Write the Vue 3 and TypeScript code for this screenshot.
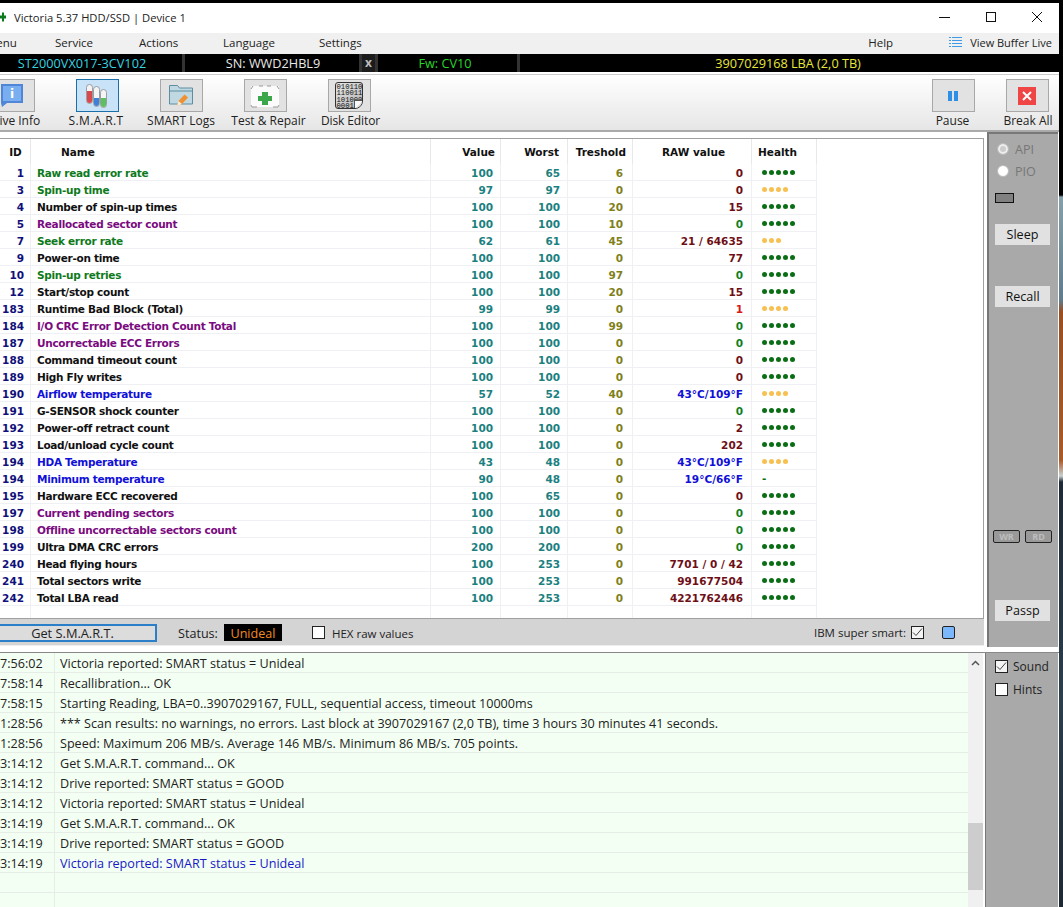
<script setup lang="ts">
interface Row { id: number; name: string; kind: string; val: number; worst: number; thr: number; raw: string; rawKind: string; dots: number; dotKind: string }
const r = (id: number, name: string, kind: string, val: number, worst: number, thr: number, raw: string, rawKind = 'maroon', dots = 5, dotKind = 'good'): Row =>
  ({ id, name, kind, val, worst, thr, raw, rawKind, dots, dotKind })
const rows: Row[] = [
  r(1, 'Raw read error rate', 'green', 100, 65, 6, '0'),
  r(3, 'Spin-up time', 'green', 97, 97, 0, '0', 'maroon', 4, 'warn'),
  r(4, 'Number of spin-up times', 'black', 100, 100, 20, '15'),
  r(5, 'Reallocated sector count', 'purple', 100, 100, 10, '0', 'zero'),
  r(7, 'Seek error rate', 'green', 62, 61, 45, '21 / 64635', 'maroon', 3, 'warn'),
  r(9, 'Power-on time', 'black', 100, 100, 0, '77'),
  r(10, 'Spin-up retries', 'green', 100, 100, 97, '0', 'zero'),
  r(12, 'Start/stop count', 'black', 100, 100, 20, '15'),
  r(183, 'Runtime Bad Block (Total)', 'black', 99, 99, 0, '1', 'red', 4, 'warn'),
  r(184, 'I/O CRC Error Detection Count Total', 'purple', 100, 100, 99, '0', 'zero'),
  r(187, 'Uncorrectable ECC Errors', 'purple', 100, 100, 0, '0', 'zero'),
  r(188, 'Command timeout count', 'black', 100, 100, 0, '0'),
  r(189, 'High Fly writes', 'black', 100, 100, 0, '0'),
  r(190, 'Airflow temperature', 'blue', 57, 52, 40, '43°C/109°F', 'blue', 4, 'warn'),
  r(191, 'G-SENSOR shock counter', 'black', 100, 100, 0, '0', 'zero'),
  r(192, 'Power-off retract count', 'black', 100, 100, 0, '2'),
  r(193, 'Load/unload cycle count', 'black', 100, 100, 0, '202'),
  r(194, 'HDA Temperature', 'blue', 43, 48, 0, '43°C/109°F', 'blue', 4, 'warn'),
  r(194, 'Minimum temperature', 'blue', 90, 48, 0, '19°C/66°F', 'blue', 0, 'none'),
  r(195, 'Hardware ECC recovered', 'black', 100, 65, 0, '0'),
  r(197, 'Current pending sectors', 'purple', 100, 100, 0, '0', 'zero'),
  r(198, 'Offline uncorrectable sectors count', 'purple', 100, 100, 0, '0', 'zero'),
  r(199, 'Ultra DMA CRC errors', 'black', 200, 200, 0, '0', 'zero'),
  r(240, 'Head flying hours', 'black', 100, 253, 0, '7701 / 0 / 42'),
  r(241, 'Total sectors write', 'black', 100, 253, 0, '991677504'),
  r(242, 'Total LBA read', 'black', 100, 253, 0, '4221762446'),
]
const logs: [string, string, boolean][] = [
  ['7:56:02', 'Victoria reported: SMART status = Unideal', false],
  ['7:58:14', 'Recallibration... OK', false],
  ['7:58:15', 'Starting Reading, LBA=0..3907029167, FULL, sequential access, timeout 10000ms', false],
  ['1:28:56', '*** Scan results: no warnings, no errors. Last block at 3907029167 (2,0 TB), time 3 hours 30 minutes 41 seconds.', false],
  ['1:28:56', 'Speed: Maximum 206 MB/s. Average 146 MB/s. Minimum 86 MB/s. 705 points.', false],
  ['3:14:12', 'Get S.M.A.R.T. command... OK', false],
  ['3:14:12', 'Drive reported: SMART status = GOOD', false],
  ['3:14:12', 'Victoria reported: SMART status = Unideal', false],
  ['3:14:19', 'Get S.M.A.R.T. command... OK', false],
  ['3:14:19', 'Drive reported: SMART status = GOOD', false],
  ['3:14:19', 'Victoria reported: SMART status = Unideal', true],
  ['', '', false],
  ['', '', false],
]
</script>

<template>
  <div class="win">
    <div class="main">
      <header class="title">
        <svg class="appicon" width="6" height="10" viewBox="0 0 6 10"><path d="M0 3.500h2V0.500h2v3h2v3H4v3H2v-3H0z" fill="#0a7a1e" /></svg>
        <span class="title-text">Victoria 5.37 HDD/SSD | Device 1</span>
        <span class="caps">
          <svg width="12" height="12" viewBox="0 0 12 12"><path d="M0 6.500h11" stroke="#111" fill="none" /></svg>
          <svg width="12" height="12" viewBox="0 0 12 12"><rect x="1.500" y="1.500" width="9" height="9" stroke="#111" fill="none" /></svg>
          <svg width="12" height="12" viewBox="0 0 12 12"><path d="M1 1l10 10M11 1L1 11" stroke="#111" fill="none" /></svg>
        </span>
      </header>
      <nav class="menu">
        <span class="m1">Menu</span><span class="m2">Service</span><span class="m3">Actions</span><span class="m4">Language</span><span class="m5">Settings</span>
        <span class="help">Help</span>
        <svg width="13" height="13" viewBox="0 0 13 13" class="bufic"><path d="M0 1.500h2M3 1.500h10M0 4.500h2M3 4.500h10M0 7.500h2M3 7.500h10M0 10.500h2M3 10.500h10" stroke="#3f9be8" fill="none" /></svg>
        <span class="buf">View Buffer Live</span>
      </nav>
      <div class="info">
        <span class="i-model">ST2000VX017-3CV102</span>
        <span class="i-sn">SN: WWD2HBL9</span>
        <span class="i-x">x</span>
        <span class="i-fw">Fw: CV10</span>
        <span class="i-lba">3907029168 LBA (2,0 TB)</span>
      </div>
      <div class="toolbar">
        <div class="tool t-drive">
          <span class="tbtn">
            <svg class="ic-drive" width="22" height="23" viewBox="0 0 22 23"><path d="M0 0h22v19H6l-5 4-1-4z" fill="#4f86d8" /><rect x="2" y="2" width="18" height="15" fill="#79aef0" /><text x="11" y="14" font-size="12" font-weight="700" text-anchor="middle" fill="#fff" font-family="DejaVu Sans">i</text></svg>
          </span>
          <span class="lbl">Drive Info</span>
        </div>
        <div class="tool t-smart">
          <span class="tbtn active">
            <svg width="22" height="24" viewBox="0 0 22 24">
              <rect x=".500" y=".500" width="6" height="19" rx="3" fill="#f4f4f4" stroke="#8a8a8a" stroke-width=".8" /><path d="M1 7h5v9.500a2.500 2.500 0 0 1-5 0z" fill="#d8484c" />
              <rect x="7.500" y="2.500" width="6" height="20" rx="3" fill="#f4f4f4" stroke="#8a8a8a" stroke-width=".8" /><path d="M8 14h5v5.500a2.500 2.500 0 0 1-5 0z" fill="#3f7fd8" />
              <rect x="14.500" y="5.500" width="6" height="18" rx="3" fill="#f4f4f4" stroke="#8a8a8a" stroke-width=".8" /><path d="M15 14h5v6.500a2.500 2.500 0 0 1-5 0z" fill="#5cc060" />
            </svg>
          </span>
          <span class="lbl">S.M.A.R.T</span>
        </div>
        <div class="tool t-logs">
          <span class="tbtn">
            <svg width="24" height="23" viewBox="0 0 24 23">
              <path d="M.500 1.500h8l2 2.500H23.500V20H.500z" fill="#bfd8e2" stroke="#5d8ea3" />
              <path d="M.500 7h23" stroke="#5d8ea3" />
              <path d="M8 22l1.500-5 6-6.500 3.500 3-6 6.500z" fill="#f09030" /><path d="M8 22l1.500-5 3.500 3z" fill="#fbeed8" />
            </svg>
          </span>
          <span class="lbl">SMART Logs</span>
        </div>
        <div class="tool t-test">
          <span class="tbtn">
            <svg width="30" height="24" viewBox="0 0 30 24">
              <rect x="1" y="2" width="28" height="21" fill="#fbfbfb" />
              <path d="M1 5l2-3M29 5l-2-3M1 21l1 2h5M29 21l-1 2h-5M9 2h4M17 2h4" fill="none" stroke="#999" />
              <path d="M12 8h6v4h4v5h-4v4h-6v-4H8v-5h4z" fill="#3aa84a" />
            </svg>
          </span>
          <span class="lbl">Test &amp; Repair</span>
        </div>
        <div class="tool t-disk">
          <span class="tbtn">
            <span class="disk">
              <span>010110</span><span>110011</span><span>101000</span><span>0001</span>
            </span>
          </span>
          <span class="lbl">Disk Editor</span>
        </div>
        <div class="tool t-pause">
          <span class="tbtn">
            <svg width="10" height="10" viewBox="0 0 10 10"><path d="M0 0h4v10H0zM6 0h4v10H6z" fill="#2f8fe6" /></svg>
          </span>
          <span class="lbl">Pause</span>
        </div>
        <div class="tool t-break">
          <span class="tbtn">
            <span class="redx"><svg width="12" height="12" viewBox="0 0 12 12"><path d="M2 2l8 8M10 2l-8 8" stroke="#fff" stroke-width="2" fill="none" /></svg></span>
          </span>
          <span class="lbl">Break All</span>
        </div>
      </div>

      <div class="middle">
        <section class="smart">
          <div class="table">
            <div class="thead">
              <span class="c-id">ID</span><span class="c-name">Name</span><span class="c-val">Value</span><span class="c-worst">Worst</span><span class="c-thr">Treshold</span><span class="c-raw">RAW value</span><span class="c-health">Health</span>
            </div>
            <div v-for="(x, i) in rows" :key="i" class="trow">
              <span class="c-id idv">{{ x.id }}</span>
              <span class="c-name" :class="x.kind">{{ x.name }}</span>
              <span class="c-val teal">{{ x.val }}</span>
              <span class="c-worst teal">{{ x.worst }}</span>
              <span class="c-thr olive">{{ x.thr }}</span>
              <span class="c-raw" :class="'r-' + x.rawKind">{{ x.raw }}</span>
              <span class="c-health">
                <span v-if="x.dots" class="dots" :class="x.dotKind"><i v-for="n in x.dots" :key="n"></i></span>
                <span v-else class="dash">-</span>
              </span>
            </div>
            <div class="trow blank"><span class="c-id"></span><span class="c-name"></span><span class="c-val"></span><span class="c-worst"></span><span class="c-thr"></span><span class="c-raw"></span><span class="c-health"></span></div>
          </div>
          <div class="status">
            <button class="getbtn">Get S.M.A.R.T.</button>
            <span class="st-label">Status:</span>
            <span class="st-val">Unideal</span>
            <span class="cb hexcb"></span>
            <span class="hex">HEX raw values</span>
            <span class="ibm">IBM super smart:</span>
            <span class="cb checked">
              <svg width="11" height="9" viewBox="0 0 11 9"><path d="M1 4.500l3 3 6-7" stroke="#444" fill="none" /></svg>
            </span>
            <span class="bluebox"></span>
          </div>
        </section>
        <aside class="side">
          <label class="radio"><i class="rd sel"></i>API</label>
          <label class="radio pio"><i class="rd"></i>PIO</label>
          <span class="led"></span>
          <button class="sbtn sleep">Sleep</button>
          <button class="sbtn recall">Recall</button>
          <div class="wr-rd"><span>WR</span><span>RD</span></div>
          <button class="sbtn passp">Passp</button>
        </aside>
      </div>

      <div class="bottom">
        <section class="log">
          <div class="log-rows">
            <div v-for="(l, i) in logs" :key="i" class="lrow" :class="{ hi: l[2] }">
              <span class="lt">{{ l[0] }}</span><span class="lm">{{ l[1] }}</span>
            </div>
          </div>
          <div class="scroll">
            <svg width="9" height="6" viewBox="0 0 9 6" class="sup"><path d="M1 5l3.500-3.500L8 5" stroke="#555" stroke-width="1.500" fill="none" /></svg>
            <span class="thumb"></span>
          </div>
        </section>
        <aside class="side2">
          <label class="cbl"><span class="cb checked"><svg width="11" height="9" viewBox="0 0 11 9"><path d="M1 4.500l3 3 6-7" stroke="#444" fill="none" /></svg></span>Sound</label>
          <label class="cbl"><span class="cb"></span>Hints</label>
        </aside>
      </div>
    </div>
    <div class="desk"></div>
  </div>
</template>

<style>
html, body { margin: 0; background: #fff; }
</style>

<style scoped>
.win {
  width: 1063px; height: 907px; overflow: hidden; display: flex;
  font-family: "Open Sans", "Liberation Sans", sans-serif; font-size: 12.600px; color: #222;
  background: #fff;
}
.main { width: 1059px; height: 907px; flex: none; border-top: 3px solid #000; box-sizing: border-box; display: flex; flex-direction: column; overflow: hidden; }
.desk { flex: 1; background: linear-gradient(#000 0, #000 195px, #84a0aa 197px, #5e7c8c 300px, #9a4e22 312px, #a85a28 460px, #c8d0d0 476px, #1e2a35 482px, #2a3e4c 700px, #1e2833 907px); }
.title { height: 30px; display: flex; align-items: center; flex: none; background: #fff; padding-bottom: 2px; box-sizing: border-box; }
.appicon { margin-right: 8px; }
.title-text { font-size: 11.200px; }
.caps { margin-left: auto; display: flex; gap: 34px; margin-right: 16px; }
.menu { height: 21px; flex: none; background: #f0f0f0; display: flex; align-items: center; padding-bottom: 3px; box-sizing: border-box; font-size: 11.500px; }
.m1 { margin-left: -14px; width: 69px; }
.m2 { width: 84px; } .m3 { width: 84px; } .m4 { width: 96px; } .m5 { flex: none; }
.help { margin-left: auto; margin-right: 56px; }
.bufic { margin-right: 8px; }
.buf { margin-right: 7px; font-size: 11px; }
.info { height: 18px; flex: none; background: #000; display: flex; align-items: center; font-size: 12.700px; margin-bottom: 2px; }
.info span { box-sizing: border-box; text-align: center; border-right: 3px solid #333; line-height: 18px; }
.i-model { width: 185px; color: #35d5e0; padding-right: 18px; }
.i-sn { width: 177px; color: #e8e8e8; padding-left: 2px; }
.i-x { width: 16px; color: #bbb; font-weight: 700; background: #1c1c1c; font-size: 12px; }
.i-fw { width: 142px; color: #26d626; padding-right: 5px; }
.i-lba { flex: 1; color: #e8e838; border-right: 0 !important; padding-right: 3px; }
.toolbar { height: 58px; flex: none; background: linear-gradient(#fff, #e6e6e6); border-bottom: 2px solid #aaa; border-top: 1px solid #ccc; display: flex; position: relative; box-sizing: border-box; font-size: 12px; }
.tool { position: absolute; top: 4px; display: flex; flex-direction: column; align-items: center; width: 90px; white-space: nowrap; }
.tbtn { width: 43px; height: 33px; background: #e2e2e2; border: 1px solid #a8a8a8; box-sizing: border-box; display: flex; align-items: center; justify-content: center; flex: none; }
.tbtn.active { background: #c8e2f8; border-color: #1a6fa8; }
.lbl { line-height: 17px; }
.ic-drive { margin-right: 2px; }
.t-drive { left: -32px; }
.t-smart { left: 52px; } .t-smart .lbl { margin-right: 2px; letter-spacing: .4px; }
.t-logs { left: 136px; } .t-logs .lbl { margin-right: 0; }
.t-test { left: 220px; } .t-test .lbl { margin-left: 7px; }
.t-disk { left: 304px; } .t-disk .lbl { margin-left: 3px; letter-spacing: -.1px; }
.t-pause { left: 908px; } .t-pause .lbl { margin-right: 1px; }
.t-break { left: 982px; } .t-break .lbl { margin-left: 2px; }
.disk { width: 28px; height: 27px; background: linear-gradient(135deg, #e6e6e6, #b4b4b4); border: 1px solid #333; border-radius: 3px 3px 8px 3px; box-sizing: border-box; display: flex; flex-direction: column; font: 7.200px/6.300px "Liberation Mono", monospace; color: #111; padding: 1px 0 0 .5px; overflow: hidden; position: relative; }
.disk::after { content: ""; position: absolute; right: -1px; bottom: -1px; width: 9px; height: 9px; background: linear-gradient(135deg, #f8f8f8 50%, #e4e4e4 50%); border-top: 1px solid #555; border-left: 1px solid #555; box-sizing: border-box; }
.redx { width: 18px; height: 18px; background: #f04545; display: flex; align-items: center; justify-content: center; }

.middle { display: flex; height: 518px; flex: none; }
.smart { width: 985px; flex: none; display: flex; flex-direction: column; padding-top: 6px; box-sizing: border-box; }
.table { height: 481px; flex: none; border: 1px solid #a0a0a0; border-left: 0; margin-right: 1px; box-sizing: border-box; background: #fff; overflow: hidden; font-family: "DejaVu Sans", sans-serif; font-size: 10.500px; font-weight: 700; }
.thead, .trow { display: grid; grid-template-columns: 31px 400px 70px 67px 65px 119px 65px; }
.thead { height: 25px; align-items: center; color: #111; }
.thead span { height: 25px; line-height: 27px; border-right: 1px solid #e8e8e8; box-sizing: border-box; padding: 0 5px; text-align: right; }
.thead .c-id { text-align: center; padding: 0 0 0 1px; }
.thead .c-name { text-align: left; padding-left: 30px; }
.thead .c-worst { padding-right: 8px; }
.thead .c-thr { padding-right: 6px; }
.thead .c-raw { text-align: center; padding: 0 0 0 3px; }
.thead .c-health { text-align: left; padding-left: 6px; }
.trow { height: 17px; }
.trow > span { display: block; height: 17px; line-height: 18px; box-sizing: border-box; border-bottom: 1px solid #eef0f4; border-right: 1px solid #eef0f4; padding: 0 7px; text-align: right; white-space: nowrap; }
.trow .c-id { padding: 0 6px 0 0; color: #10107a; }
.trow .c-name { text-align: left; padding-left: 6px; letter-spacing: -.3px; }
.trow .c-thr { padding-right: 9px; }
.trow .c-raw { padding-right: 8px; }
.trow .c-health { text-align: left; padding-left: 10px; line-height: 16px; }
.green { color: #0e7a1c; } .black { color: #111; } .purple { color: #7a0a80; } .blue { color: #1010d8; }
.teal { color: #1b8080; } .olive { color: #80801a; }
.r-maroon { color: #6e0f16; } .r-zero { color: #0f7f1f; } .r-red { color: #d81818; } .r-blue { color: #1010d8; }
.dots { display: flex; gap: 2px; align-items: center; height: 16px; }
.dots i { width: 5px; height: 5px; border-radius: 50%; display: block; }
.good i { background: #0a6e14; } .warn i { background: #f8c050; }
.dash { color: #0a6e14; }
.status { height: 27px; flex: none; background: #d4d4d4; display: flex; align-items: center; margin-right: 1px; border-bottom: 1px solid #eee; padding-top: 1px; box-sizing: border-box; }
.getbtn { width: 172px; margin-left: -15px; height: 18px; border: 2px solid #2a7fc8; background: #dcdcdc; font: inherit; font-size: 12.800px; line-height: 15px; color: #222; padding: 0 0 0 3px; flex: none; }
.st-label { margin-left: 21px; width: 46px; padding-top: 2px; }
.st-val { width: 58px; height: 17px; line-height: 19px; background: #000; color: #f08a24; text-align: center; }
.cb { width: 13px; height: 13px; border: 1px solid #222; background: #fff; box-sizing: border-box; display: inline-flex; align-items: center; justify-content: center; flex: none; }
.hexcb { margin-left: 30px; }
.hex { margin-left: 7px; font-size: 11.500px; padding-top: 1px; }
.ibm { margin-left: auto; margin-right: 5px; font-size: 11.500px; }
.checked { background: #f4f4f4; }
.bluebox { width: 13px; height: 13px; box-sizing: border-box; background: #7ab8fb; border: 1px solid #222; border-radius: 2px; margin-left: 18px; margin-right: 29px; }

.side { width: 71px; margin: 0 1px 0 2px; height: 515px; background: #a9a9a9; border-left: 2px solid #777; border-top: 2px solid #777; box-sizing: border-box; display: flex; flex-direction: column; align-items: center; color: #777; flex: none; }
.radio { align-self: flex-start; margin-left: 8px; display: flex; align-items: center; gap: 6px; height: 20px; margin-top: 5px; }
.radio.pio { margin-top: 2px; }
.rd { width: 12px; height: 12px; background: #fff; border-radius: 50%; display: block; border: 1px solid #bbb; box-sizing: border-box; }
.rd.sel { background: #ccc; box-shadow: inset 0 0 0 2px #eee; }
.led { align-self: flex-start; margin: 12px 0 0 6px; width: 19px; height: 10px; background: #808080; border: 1px solid #111; box-sizing: border-box; }
.sbtn { width: 55px; height: 21px; border: 0; background: #e1e1e1; font: inherit; color: #111; padding: 0; flex: none; margin-right: 2px; }
.sleep { margin-top: 21px; } .recall { margin-top: 41px; }
.wr-rd { display: flex; gap: 5px; margin-top: 223px; margin-right: 2px; }
.wr-rd span { width: 27px; height: 13px; border: 1px solid #222; border-radius: 2px; box-sizing: border-box; font-size: 9px; font-weight: 700; line-height: 11px; text-align: center; color: #bdbdbd; background: #999; }
.passp { margin-top: 57px; }

.bottom { flex: 1; display: flex; border-top: 1px solid #888; margin-top: 2px; min-height: 0; }
.log { width: 983px; flex: none; display: flex; background: #f3fff3; }
.log-rows { width: 968px; flex: none; }
.lrow { height: 20px; display: flex; box-sizing: border-box; border-bottom: 1px solid #e6ece6; line-height: 21px; white-space: nowrap; }
.lrow.hi .lm { color: #1818c8; }
.lt { width: 55px; flex: none; box-sizing: border-box; border-right: 1px solid #e6ece6; }
.lm { padding-left: 5px; }
.scroll { width: 15px; background: #f0f0f0; position: relative; }
.sup { position: absolute; left: 3px; top: 7px; }
.thumb { position: absolute; left: 0; right: 0; top: 170px; height: 67px; background: #cdcdcd; }
.side2 { margin: 0 1px 0 2px; flex: 1; background: #a9a9a9; border-left: 1px solid #777; box-sizing: border-box; padding: 6px 0 0 9px; display: flex; flex-direction: column; gap: 9px; color: #222; font-size: 12px; }
.cbl { display: flex; align-items: center; gap: 5px; height: 14px; }
</style>
